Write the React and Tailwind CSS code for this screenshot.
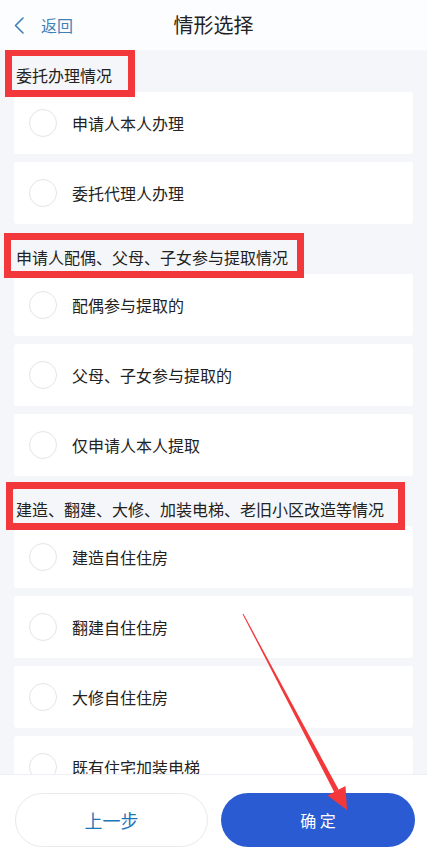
import React from 'react';

const font = { fontFamily: '"Noto Sans CJK SC", "Noto Sans", sans-serif' };

const sections = [
  {
    title: '委托办理情况',
    box: '-left-[11px] -right-[23px] -top-[17px] -bottom-[13px]',
    items: ['申请人本人办理', '委托代理人办理'],
  },
  {
    title: '申请人配偶、父母、子女参与提取情况',
    box: '-left-[12px] -right-[16px] -top-[15px] -bottom-[12px]',
    items: ['配偶参与提取的', '父母、子女参与提取的', '仅申请人本人提取'],
  },
  {
    title: '建造、翻建、大修、加装电梯、老旧小区改造等情况',
    box: '-left-[10px] -right-[21px] -top-[18px] -bottom-[12px]',
    items: ['建造自住住房', '翻建自住住房', '大修自住住房', '既有住宅加装电梯'],
  },
];

const Option = ({ label }) => (
  <div className="mx-[14px] mb-[8px] flex h-[62px] items-center rounded-[3px] bg-white">
    <span className="ml-[15px] h-[28px] w-[28px] shrink-0 rounded-full border border-[#e4e4e4]" />
    <span className="ml-[15px] text-[16px] leading-[18px] text-[#222]">{label}</span>
  </div>
);

const App = () => {
  return (
    <div className="relative flex h-[864px] w-[427px] flex-col overflow-hidden bg-[#f4f6f9]" style={font}>
      {/* header */}
      <header className="grid h-[50px] shrink-0 grid-cols-[1fr_auto_1fr] items-center bg-[#fcfdfe]">
        <div className="flex items-center pl-[14px] text-[16px] leading-[18px]">
          <svg width="10" height="17" viewBox="0 0 10 17" fill="none">
            <polyline points="9,1 1.5,8.5 9,16" stroke="#3f80b8" strokeWidth="1.6" strokeLinejoin="round" strokeLinecap="round" />
          </svg>
          <span className="ml-[17px] text-[#3f80b8]">返回</span>
        </div>
        <h1 className="text-[20px] leading-[24px] text-[#222]">情形选择</h1>
        <div />
      </header>

      <main className="flex-1 overflow-hidden">
        {sections.map((s) => (
          <section key={s.title}>
            <div className="px-[16px] pt-[16px] pb-[8px] text-[16px] leading-[18px] text-[#222]">
              <span className="relative block w-fit">
                <span className={`pointer-events-none absolute z-10 border-[7px] border-[#f2383b] ${s.box}`} />
                {s.title}
              </span>
            </div>
            {s.items.map((it) => (
              <Option key={it} label={it} />
            ))}
          </section>
        ))}
      </main>

      {/* footer */}
      <footer className="flex h-[90px] shrink-0 gap-[13px] border-t border-[#eceff3] bg-white pt-[18px] pl-[15px]">
        <button className="h-[54px] w-[193px] rounded-full border border-[#e8e9eb] bg-white text-[18px] text-[#1b76b9]">
          上一步
        </button>
        <button className="h-[54px] w-[194px] rounded-full bg-[#2a5bd3] text-[16px] text-white">
          确 定
        </button>
      </footer>

      {/* annotation arrow */}
      <svg className="pointer-events-none absolute left-0 top-0 z-20" width="427" height="864">
        <polygon points="243.4,613.8 242.6,614.2 334.3,792.2 338.7,789.8" fill="#f2383b" />
        <polygon points="347,810 327.5,795.5 345.5,786" fill="#f2383b" />
      </svg>
    </div>
  );
};

export default App;
